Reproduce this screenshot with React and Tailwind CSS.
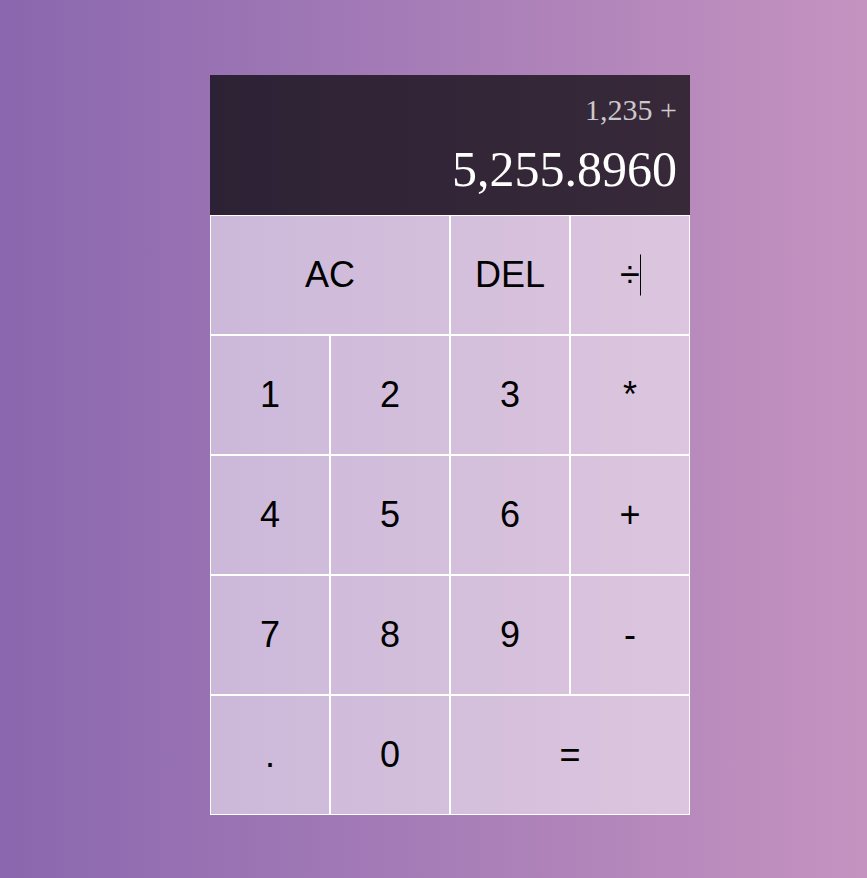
import React from "react";

const btn =
  "flex items-center justify-center border border-white bg-[rgba(255,255,255,0.5)] text-[36px] leading-[40px] text-black";

export default function App() {
  return (
    <div
      className="min-h-[878px] w-full bg-gradient-to-r from-[#8a67ae] to-[#c593c0] pt-[75px]"
      style={{ fontFamily: '"Liberation Sans", Arial, sans-serif' }}
    >
      <div className="ml-[210px] grid w-[480px] grid-cols-[repeat(4,120px)] grid-rows-[140px_repeat(5,120px)]">
        <div
          className="col-span-4 flex flex-col items-end justify-between bg-[rgba(0,0,0,0.7)] pb-[20px] pr-[13px] pt-[17px] text-white"
          style={{ fontFamily: '"Liberation Serif", "Times New Roman", serif' }}
        >
          <div className="text-[30px] leading-[36px] text-[rgba(255,255,255,0.75)]">1,235 +</div>
          <div className="text-[50px] leading-[52px]">5,255.8960</div>
        </div>
        <div className={`${btn} col-span-2`}>AC</div>
        <div className={btn}>DEL</div>
        <div className={btn}>
          <span className="relative">
            ÷
            <span className="absolute right-[-1px] top-1/2 h-[41px] w-px -translate-y-1/2 bg-black" />
          </span>
        </div>
        <div className={btn}>1</div>
        <div className={btn}>2</div>
        <div className={btn}>3</div>
        <div className={btn}>*</div>
        <div className={btn}>4</div>
        <div className={btn}>5</div>
        <div className={btn}>6</div>
        <div className={btn}>+</div>
        <div className={btn}>7</div>
        <div className={btn}>8</div>
        <div className={btn}>9</div>
        <div className={btn}>-</div>
        <div className={btn}>.</div>
        <div className={btn}>0</div>
        <div className={`${btn} col-span-2`}>=</div>
      </div>
    </div>
  );
}
